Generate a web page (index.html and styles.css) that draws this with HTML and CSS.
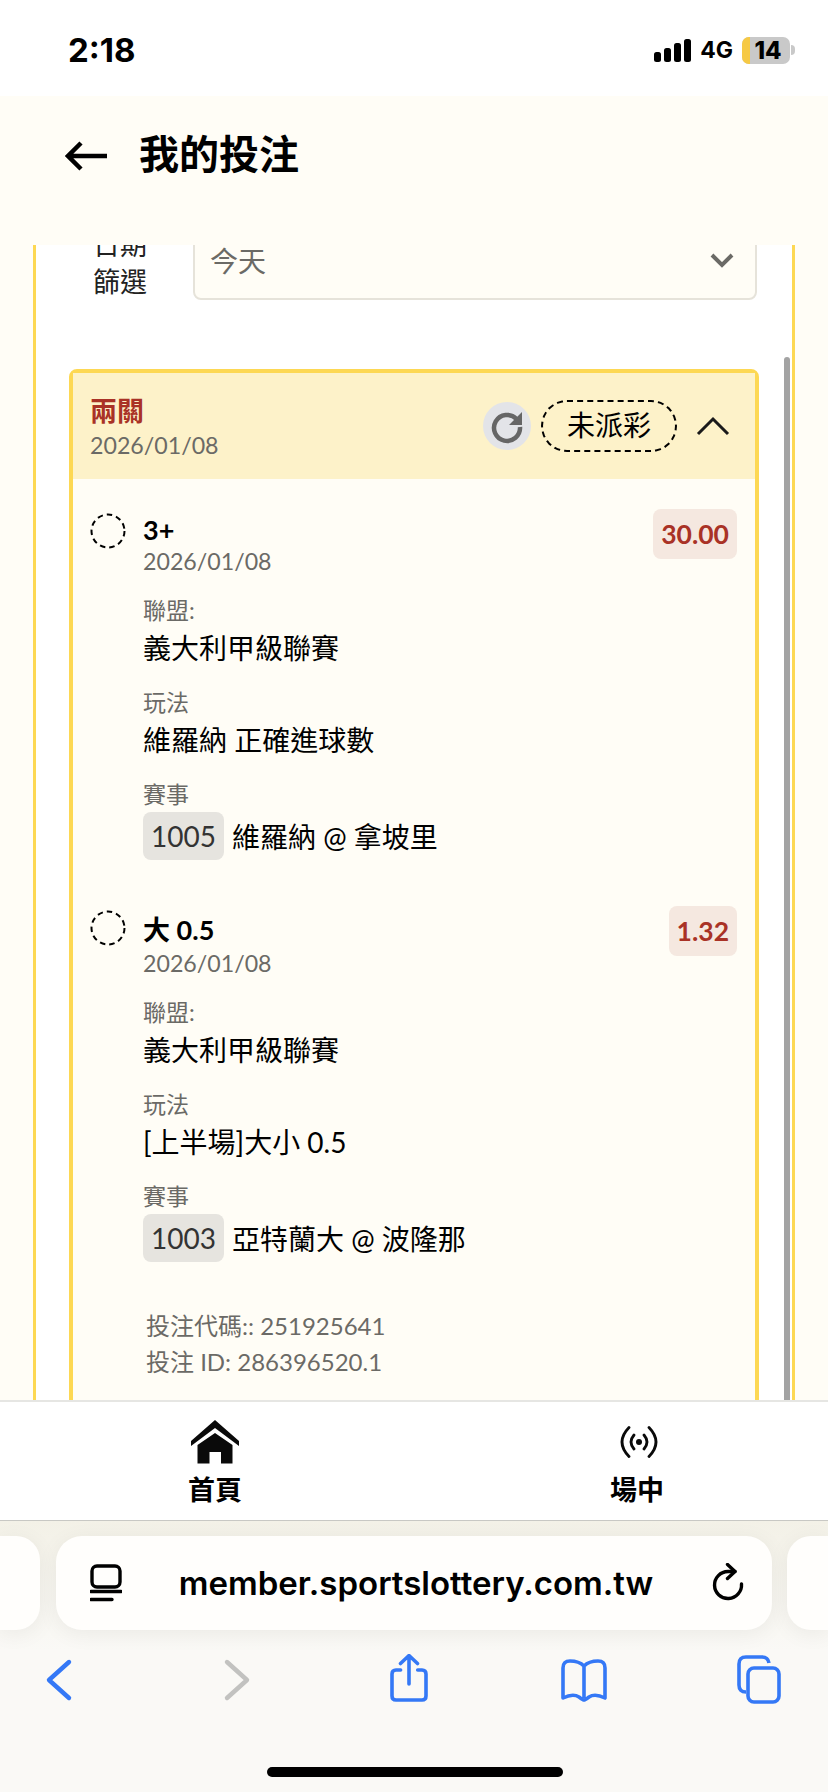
FILE: index.html
```html
<!DOCTYPE html>
<html lang="zh-Hant">
<head>
    <meta charset="UTF-8">
    <meta name="viewport" content="width=device-width, initial-scale=1.0">
    <title>我的投注</title>
    <link rel="stylesheet" href="styles.css">
</head>
<body>
    <div class="screen">
        <div class="status-bar">
            <span class="time">2:18</span>
            <div class="status-icons">
                <svg class="signal" width="37" height="23" viewBox="0 0 37 23">
                    <rect x="0" y="13" width="7" height="10" rx="2.5"/>
                    <rect x="10" y="9" width="7" height="14" rx="2.5"/>
                    <rect x="20" y="4" width="7" height="19" rx="2.5"/>
                    <rect x="30" y="0" width="7" height="23" rx="2.5"/>
                </svg>
                <span class="network">4G</span>
                <div class="battery"><span class="battery-level"></span><span class="battery-num">14</span></div>
                <span class="battery-cap"></span>
            </div>
        </div>

        <div class="page-header">
            <svg class="back-arrow" width="42" height="32" viewBox="0 0 42 32">
                <path d="M16 3 L3 16 L16 29 M3 16 H42" fill="none" stroke="#000" stroke-width="4.5"/>
            </svg>
            <h1>我的投注</h1>
        </div>

        <div class="main">
            <div class="panel">
                <div class="filter-row">
                    <div class="filter-label">日期<br>篩選</div>
                    <div class="filter-select">
                        <span>今天</span>
                        <svg width="26" height="16" viewBox="0 0 26 16">
                            <path d="M3 3 L13 13 L23 3" fill="none" stroke="#6b6a66" stroke-width="4"/>
                        </svg>
                    </div>
                </div>

                <div class="card">
                    <div class="card-head">
                        <div class="card-title">
                            <div class="parlay">兩關</div>
                            <div class="card-date">2026/01/08</div>
                        </div>
                        <div class="refresh">
                            <svg width="36" height="36" viewBox="0 0 36 36">
                                <path d="M27.5 11 A13 13 0 1 0 31 19" fill="none" stroke="#666" stroke-width="4.5"/>
                                <path d="M33 4 V17 H20 Z" fill="#666"/>
                            </svg>
                        </div>
                        <div class="state">未派彩</div>
                        <svg class="chevron" width="34" height="20" viewBox="0 0 34 20">
                            <path d="M2 18 L17 3 L32 18" fill="none" stroke="#1a1a1a" stroke-width="3"/>
                        </svg>
                    </div>

                    <div class="card-body">
                        <div class="leg">
                            <svg class="pending" width="36" height="36" viewBox="0 0 36 36">
                                <circle cx="18" cy="18" r="16.5" fill="none" stroke="#000" stroke-width="2" stroke-dasharray="5.5 4"/>
                            </svg>
                            <div class="leg-info">
                                <div class="leg-top">
                                    <div>
                                        <div class="pick">3+</div>
                                        <div class="leg-date">2026/01/08</div>
                                    </div>
                                    <div class="odds">30.00</div>
                                </div>
                                <div class="field-label">聯盟:</div>
                                <div class="field-value">義大利甲級聯賽</div>
                                <div class="field-label">玩法</div>
                                <div class="field-value">維羅納 正確進球數</div>
                                <div class="field-label">賽事</div>
                                <div class="match"><span class="match-no">1005</span>維羅納 @ 拿坡里</div>
                            </div>
                        </div>
                        <div class="leg">
                            <svg class="pending" width="36" height="36" viewBox="0 0 36 36">
                                <circle cx="18" cy="18" r="16.5" fill="none" stroke="#000" stroke-width="2" stroke-dasharray="5.5 4"/>
                            </svg>
                            <div class="leg-info">
                                <div class="leg-top tall">
                                    <div>
                                        <div class="pick">大 0.5</div>
                                        <div class="leg-date">2026/01/08</div>
                                    </div>
                                    <div class="odds">1.32</div>
                                </div>
                                <div class="field-label">聯盟:</div>
                                <div class="field-value">義大利甲級聯賽</div>
                                <div class="field-label">玩法</div>
                                <div class="field-value">[上半場]大小 0.5</div>
                                <div class="field-label">賽事</div>
                                <div class="match"><span class="match-no">1003</span>亞特蘭大 @ 波隆那</div>
                            </div>
                        </div>
                        <div class="bet-codes">
                            <div>投注代碼:: 251925641</div>
                            <div>投注 ID: 286396520.1</div>
                        </div>
                    </div>
                </div>
            </div>
            <div class="scrollbar"></div>
        </div>

        <div class="tabbar">
            <div class="tab">
                <svg width="48" height="44" viewBox="0 0 48 44">
                    <path d="M24 0 L48 21 V26 L24 8 L0 26 V21 Z" fill="#0a0a0a"/>
                    <path d="M24 13 L41.5 25 V43.5 H30 V32 H18.5 V43.5 H6.5 V25 Z" fill="#0a0a0a"/>
                </svg>
                <span>首頁</span>
            </div>
            <div class="tab">
                <svg width="40" height="32" viewBox="0 0 40 32">
                    <circle cx="20" cy="16" r="3" fill="#0a0a0a"/>
                    <path d="M15 9 Q9 16 15 23 M25 9 Q31 16 25 23 M10 1.5 Q-4 16 10 30.5 M30 1.5 Q44 16 30 30.5" fill="none" stroke="#0a0a0a" stroke-width="2.8" stroke-linecap="round"/>
                </svg>
                <span>場中</span>
            </div>
        </div>

        <div class="browser">
            <div class="url-row">
                <div class="side-pill"></div>
                <div class="url-pill">
                    <svg width="32" height="38" viewBox="0 0 32 38">
                        <rect x="2" y="2" width="28" height="21" rx="5" fill="none" stroke="#000" stroke-width="3.4"/>
                        <path d="M1 27.5 H31 M1 35.5 H22" fill="none" stroke="#000" stroke-width="3.4" stroke-linecap="round"/>
                    </svg>
                    <span class="url">member.sportslottery.com.tw</span>
                    <svg width="34" height="40" viewBox="0 0 34 40">
                        <path d="M30.5 21 A13.5 13.5 0 1 1 17 8.5 H24" fill="none" stroke="#000" stroke-width="3.4" stroke-linecap="round"/>
                        <path d="M16.5 1.5 L24 8.5 L16.5 15.5" fill="none" stroke="#000" stroke-width="3.4" stroke-linecap="round" stroke-linejoin="round"/>
                    </svg>
                </div>
                <div class="side-pill"></div>
            </div>
            <div class="toolbar">
                <svg width="48" height="50" viewBox="0 0 48 50">
                    <path d="M34 8 L14 26 L34 44" fill="none" stroke="#3478f6" stroke-width="4.4" stroke-linecap="round" stroke-linejoin="round"/>
                </svg>
                <svg width="48" height="50" viewBox="0 0 48 50">
                    <path d="M17 8 L37 26 L17 44" fill="none" stroke="#c2c2c0" stroke-width="4.4" stroke-linecap="round" stroke-linejoin="round"/>
                </svg>
                <svg width="48" height="50" viewBox="0 0 48 50">
                    <path d="M15.6 16 H11 Q7 16 7 20 V42 Q7 46 11 46 H37 Q41 46 41 42 V20 Q41 16 37 16 H32.7 M24 30 V2 M15.5 9.5 L24 1.5 L32.5 9.5" fill="none" stroke="#3478f6" stroke-width="3.6" stroke-linecap="round" stroke-linejoin="round"/>
                </svg>
                <svg width="48" height="50" viewBox="0 0 48 50">
                    <path d="M24 12 Q19 7 10 7 Q3 7 3 14 V44 Q13 39 19 43 Q23 46 24 46 Q25 46 29 43 Q35 39 45 44 V14 Q45 7 38 7 Q29 7 24 12 V44" fill="none" stroke="#3478f6" stroke-width="3.6" stroke-linejoin="round"/>
                </svg>
                <svg width="48" height="50" viewBox="0 0 48 50">
                    <path d="M11 38 Q4 38 4 31 V10 Q4 3 11 3 H27 Q33 3 34 9" fill="none" stroke="#3478f6" stroke-width="3.6"/>
                    <rect x="13" y="14" width="31" height="34" rx="6" fill="none" stroke="#3478f6" stroke-width="3.6"/>
                </svg>
            </div>
            <div class="home-indicator"></div>
        </div>
    </div>
</body>
</html>
```

FILE: styles.css
```css
* {
    box-sizing: border-box;
}
body {
    margin: 0;
    padding: 0;
    font-family: Lato, "Noto Sans CJK TC", sans-serif;
    color: #000;
}
.screen {
    width: 828px;
    height: 1792px;
    display: flex;
    flex-direction: column;
    overflow: hidden;
    background: #fffdf6;
}

/* status bar */
.status-bar {
    height: 96px;
    flex: none;
    display: flex;
    justify-content: space-between;
    align-items: center;
    padding: 4px 33px 0 68px;
    background: #fff;
}
.time {
    font: 700 33px Inter, sans-serif;
}
.status-icons {
    display: flex;
    align-items: center;
}
.network {
    font: 700 23px Inter, sans-serif;
    margin: 0 9px;
}
.battery {
    position: relative;
    width: 48px;
    height: 27px;
    border-radius: 7px;
    overflow: hidden;
    background: #c9c9c9;
    display: flex;
    align-items: center;
    justify-content: center;
}
.battery-level {
    position: absolute;
    left: 0;
    top: 0;
    bottom: 0;
    width: 8px;
    background: #f6c944;
}
.battery-num {
    position: relative;
    font: 800 24px Inter, sans-serif;
    margin-left: 4px;
}
.battery-cap {
    width: 4px;
    height: 10px;
    margin-left: 1px;
    border-radius: 0 4px 4px 0;
    background: #c9c9c9;
}

/* header */
.page-header {
    height: 149px;
    flex: none;
    display: flex;
    align-items: flex-start;
    padding: 35px 0 0 65px;
    background: #fffdf6;
}
.back-arrow {
    margin-top: 9px;
}
.page-header h1 {
    margin: 0 0 0 32px;
    font-size: 40px;
    line-height: 46px;
    font-weight: 700;
}

/* scrolled content */
.main {
    height: 1155px;
    flex: none;
    position: relative;
    overflow: hidden;
    padding: 0 33px;
}
.panel {
    margin-top: -20px;
    background: #fff;
    border-left: 3px solid #fdd853;
    border-right: 3px solid #fdd853;
    padding: 0 33px;
    height: 1300px;
}
.filter-row {
    display: flex;
    align-items: center;
    height: 75px;
    margin-bottom: 69px;
}
.filter-label {
    width: 124px;
    flex: none;
    padding-right: 22px;
    text-align: center;
    font-size: 27px;
    line-height: 37px;
    color: #222;
}
.filter-select {
    flex: 1;
    height: 75px;
    margin-right: 2px;
    display: flex;
    justify-content: space-between;
    align-items: center;
    padding: 0 20px 6px 15px;
    background: #fffdf6;
    border: 2px solid #e6e3da;
    border-radius: 8px;
    font-size: 28px;
    color: #6b6a66;
}

/* bet card */
.card {
    width: 690px;
    border: 4px solid #fdd853;
    border-radius: 8px;
    background: #fffdf6;
}
.card-head {
    height: 106px;
    display: flex;
    align-items: center;
    padding: 0 25px 0 17px;
    background: #fdf2c9;
}
.card-title {
    flex: 1;
}
.parlay {
    font-size: 27px;
    line-height: 38px;
    font-weight: 700;
    color: #a93226;
}
.card-date {
    font-size: 23.2px;
    line-height: 30px;
    color: #6b6a66;
}
.refresh {
    width: 48px;
    height: 48px;
    border-radius: 50%;
    background: #e3e4e8;
    display: flex;
    align-items: center;
    justify-content: center;
}
.state {
    width: 136px;
    height: 52px;
    margin: 0 19px 0 10px;
    border: 2px dashed #000;
    border-radius: 26px;
    text-align: center;
    font-size: 28px;
    line-height: 46px;
}
.card-body {
    padding: 30px 18px 60px 17px;
}
.leg {
    display: flex;
    margin-bottom: 46px;
}
.pending {
    flex: none;
    margin-top: 4px;
}
.leg-info {
    flex: 1;
    margin-left: 17px;
}
.leg-top {
    display: flex;
    justify-content: space-between;
    align-items: flex-start;
    height: 67px;
}
.pick {
    margin-top: 4px;
    font-size: 27px;
    line-height: 34px;
    font-weight: 700;
}
.leg-date {
    font-size: 23.2px;
    line-height: 28px;
    color: #6b6a66;
}
.tall {
    height: 72px;
}
.tall .pick {
    line-height: 39px;
}
.odds {
    height: 50px;
    padding: 0 8px;
    border-radius: 8px;
    background: #f5e8e0;
    color: #a93226;
    font-size: 26.5px;
    font-weight: 700;
    line-height: 50px;
}
.field-label {
    margin-top: 19px;
    font-size: 23px;
    line-height: 30px;
    color: #6b6a66;
}
.field-value {
    margin-top: 3px;
    font-size: 28px;
    line-height: 40px;
}
.match {
    margin-top: 3px;
    display: flex;
    align-items: center;
    font-size: 28px;
}
.match-no {
    width: 81px;
    height: 48px;
    margin-right: 8px;
    border-radius: 8px;
    background: #e6e4df;
    text-align: center;
    line-height: 48px;
    color: #333;
}
.bet-codes {
    margin: 5px 0 0 56px;
    font-size: 24px;
    line-height: 36px;
    color: #6b6a66;
}
.scrollbar {
    position: absolute;
    top: 112px;
    bottom: 0;
    right: 38px;
    width: 6px;
    background: #a3a3a3;
    border-radius: 3px 3px 0 0;
}

/* bottom tabs */
.tabbar {
    height: 121px;
    flex: none;
    display: flex;
    background: #fff;
    border-top: 2px solid #e6e6e3;
    border-bottom: 1px solid #c8c8c4;
}
.tab {
    display: flex;
    flex-direction: column;
    align-items: center;
    font-size: 27px;
    font-weight: 700;
    line-height: 38px;
}
.tab svg {
    margin: 18px 0 7px;
}
.tab:first-child {
    width: 430px;
}
.tab:last-child {
    width: 398px;
    padding-left: 16px;
}
.tab:last-child svg {
    margin: 24px 0 13px 3px;
}

/* safari bottom bar */
.browser {
    height: 271px;
    flex: none;
    background: linear-gradient(#f3f1e7, #faf9f6 130px);
}
.url-row {
    display: flex;
    justify-content: space-between;
    padding-top: 15px;
}
.side-pill {
    width: 40px;
    height: 94px;
    background: #fffefc;
    box-shadow: 0 4px 22px rgba(0, 0, 0, 0.06);
    border-radius: 0 24px 24px 0;
}
.side-pill:last-child {
    width: 41px;
    border-radius: 24px 0 0 24px;
}
.url-pill {
    width: 716px;
    height: 94px;
    display: flex;
    align-items: center;
    justify-content: space-between;
    padding: 0 27px 0 34px;
    background: #fffefc;
    border-radius: 26px;
    box-shadow: 0 4px 22px rgba(0, 0, 0, 0.06);
}
.url {
    font: 600 33px Inter, sans-serif;
}
.toolbar {
    display: flex;
    justify-content: space-between;
    padding: 24px 45px 0 35px;
}
.home-indicator {
    width: 296px;
    height: 10px;
    margin: 63px 0 0 267px;
    border-radius: 5px;
    background: #000;
}
```
